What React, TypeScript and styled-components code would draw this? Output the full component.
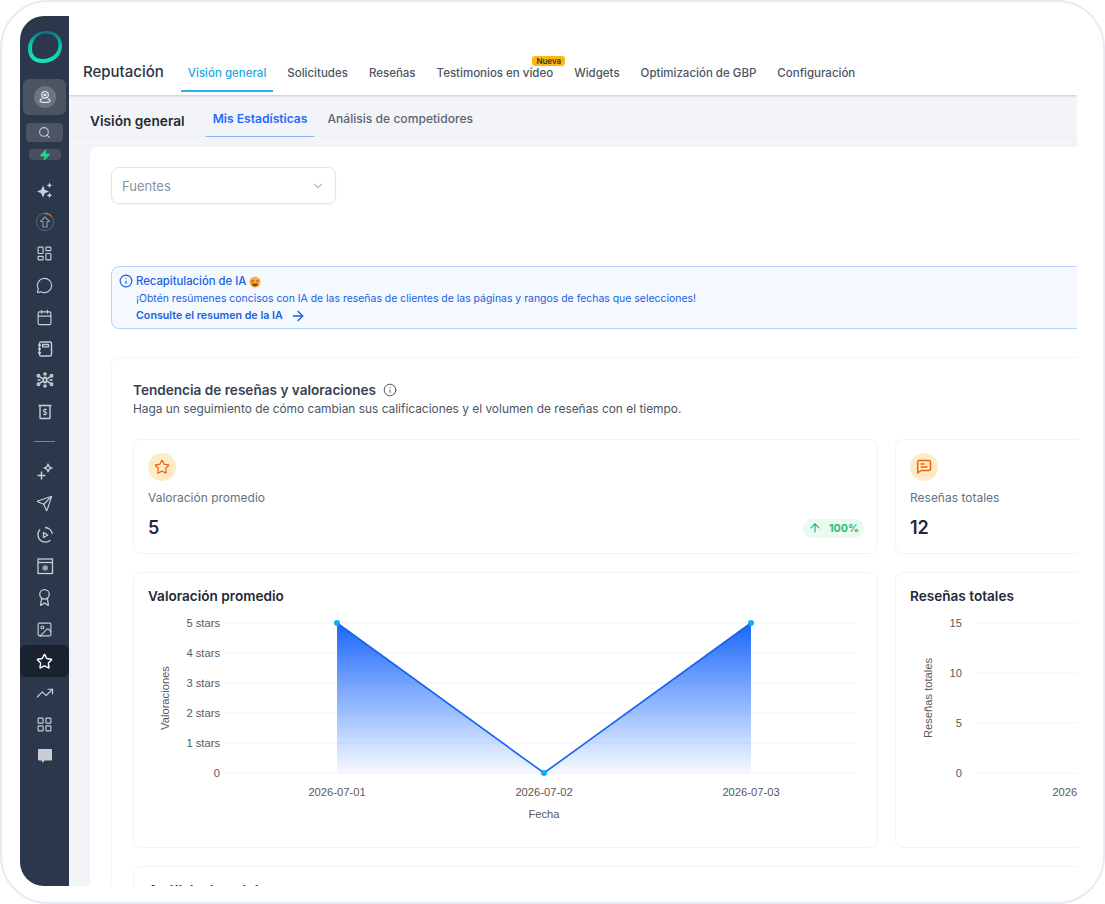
import React from "react";
import styled, { createGlobalStyle } from "styled-components";
import {
  ArrowRight, ArrowUp, Award, Calendar, ChevronDown, Image, Info, LayoutDashboard, LayoutGrid,
  MessageCircle, Search, Send, Star, TrendingUp, Zap,
} from "lucide-react";

const GlobalStyle = createGlobalStyle`
  html, body { margin: 0; padding: 0; background: #fff; }
  body { font-family: Inter, "Liberation Sans", sans-serif; }
  * { box-sizing: border-box; }
`;

const Frame = styled.div`
  width: 1105px;
  height: 904px;
  border: 2px solid #e7ebf6;
  border-radius: 48px;
  padding: 14px 26px 16px 18px;
  overflow: hidden;
`;

const Shell = styled.div`
  display: flex;
  height: 870px;
`;

const Rail = styled.nav`
  width: 49px;
  flex: none;
  background: #2b374a;
  border-radius: 24px 0 0 24px;
  display: flex;
  flex-direction: column;
  align-items: center;
  padding-top: 14px;
  color: #c9cdd4;
`;

const Logo = styled.svg`
  width: 36px;
  height: 34px;
  margin-bottom: 15px;
  flex: none;
`;

const AccountButton = styled.div`
  width: 43px;
  height: 36px;
  border-radius: 6px;
  background: #4a5463;
  display: flex;
  align-items: center;
  justify-content: center;
  flex: none;
  span {
    width: 22px;
    height: 22px;
    border-radius: 50%;
    background: #6c7481;
    display: flex;
    align-items: center;
    justify-content: center;
  }
`;

const SearchPill = styled.div`
  width: 37px;
  height: 19px;
  margin-top: 8px;
  border-radius: 4px;
  background: #4b5563;
  display: flex;
  align-items: center;
  justify-content: center;
  flex: none;
`;

const BoltPill = styled.div`
  width: 32px;
  height: 11px;
  margin: 7px 0 15px;
  border-radius: 4px;
  background: #46505f;
  display: flex;
  align-items: center;
  justify-content: center;
  color: #1fd692;
  flex: none;
`;

const RailItem = styled.div<{ $active?: boolean }>`
  width: 49px;
  height: ${(p) => (p.$active ? "32px" : "31.6px")};
  flex: none;
  display: flex;
  align-items: center;
  justify-content: center;
  border-radius: 6px;
  background: ${(p) => (p.$active ? "#1a2230" : "transparent")};
  color: ${(p) => (p.$active ? "#fff" : "inherit")};
`;

const RailDivider = styled.div`
  width: 21px;
  height: 1px;
  background: #7b838f;
  margin: 13px 0 14px;
  flex: none;
`;

const Main = styled.main`
  flex: 1;
  min-width: 0;
  background: #f3f4f8;
  overflow: hidden;
  display: flex;
  flex-direction: column;
`;

const TopBar = styled.header`
  height: 79px;
  flex: none;
  background: #fff;
  box-shadow: 0 1px 2px rgba(60, 64, 80, 0.22);
  display: flex;
  align-items: flex-end;
  padding-left: 14px;
  position: relative;
`;

const PageName = styled.h1`
  margin: 0 17px 13px 0;
  font-size: 15px;
  line-height: 20px;
  font-weight: 500;
  color: #2b3443;
`;

const TopTabs = styled.div`
  display: flex;
  gap: 7px;
`;

const TopTab = styled.div<{ $active?: boolean }>`
  position: relative;
  padding: 0 7px 7px;
  height: 34px;
  display: flex;
  align-items: flex-end;
  font-size: 11.5px;
  line-height: 20px;
  font-weight: 500;
  white-space: nowrap;
  color: ${(p) => (p.$active ? "#1ea7e4" : "#4b5563")};
  border-bottom: 2px solid ${(p) => (p.$active ? "#2cb2ee" : "transparent")};
  margin-bottom: 3px;
`;

const NewBadge = styled.span`
  position: absolute;
  top: -2px;
  right: -5px;
  height: 10px;
  padding: 0 4px;
  border-radius: 3px;
  background: #fbb818;
  color: #3f3208;
  font-size: 8px;
  line-height: 10px;
  font-weight: 600;
`;

const SubBar = styled.div`
  height: 42px;
  flex: none;
  border-bottom: 1px solid #eceef3;
  display: flex;
  align-items: flex-end;
  padding-left: 21px;
`;

const SubTitle = styled.h2`
  margin: 0 21px 5px 0;
  font-size: 13.7px;
  line-height: 20px;
  font-weight: 600;
  color: #1f2937;
`;

const SubTab = styled.div<{ $active?: boolean }>`
  padding: 0 7px 9px;
  height: 32px;
  margin-right: 6px;
  font-size: 12.1px;
  line-height: 17px;
  display: flex;
  align-items: flex-end;
  font-weight: ${(p) => (p.$active ? 600 : 500)};
  color: ${(p) => (p.$active ? "#1f6bff" : "#5b6472")};
  border-bottom: 1px solid ${(p) => (p.$active ? "#8db4fb" : "transparent")};
  margin-bottom: -1px;
`;

const Sheet = styled.div`
  width: 1200px;
  margin: 10px 0 0 21px;
  padding: 20px 0 0 21px;
  background: #fff;
  border-radius: 8px 0 0 0;
  flex: 1;
`;

const SourceSelect = styled.div`
  width: 225px;
  height: 37px;
  border: 1px solid #e3e5ea;
  border-radius: 8px;
  box-shadow: 0 1px 2px rgba(20, 30, 50, 0.06);
  display: flex;
  align-items: center;
  justify-content: space-between;
  padding: 0 10px;
  font-size: 13px;
  color: #8a93a3;
`;

const Banner = styled.div`
  margin-top: 62px;
  height: 63px;
  border: 1px solid #b8d3fb;
  border-radius: 8px;
  background: #f4f8ff;
  padding: 6px 7px;
  color: #1d5fe0;
  display: flex;
  gap: 3px;
`;

const BannerBody = styled.div`
  display: flex;
  flex-direction: column;
`;

const BannerTitle = styled.div`
  display: flex;
  align-items: center;
  gap: 3px;
  font-size: 11.3px;
  line-height: 17px;
  font-weight: 500;
`;

const BannerText = styled.div`
  font-size: 10.45px;
  line-height: 17px;
`;

const BannerLink = styled.div`
  display: flex;
  align-items: center;
  gap: 7px;
  font-size: 10.7px;
  line-height: 17px;
  font-weight: 600;
`;

const Section = styled.section`
  margin-top: 28px;
  border: 1px solid #f4f5f7;
  border-radius: 8px 0 0 8px;
  padding: 22px 0 0 21px;
`;

const SectionTitle = styled.h3`
  margin: 0;
  display: flex;
  align-items: center;
  gap: 7px;
  font-size: 13.6px;
  line-height: 20px;
  font-weight: 600;
  color: #374151;
`;

const SectionText = styled.p`
  margin: 0 0 21px;
  font-size: 11.9px;
  line-height: 18px;
  color: #4b5563;
`;

const CardGrid = styled.div`
  display: grid;
  grid-template-columns: 745px 745px;
  column-gap: 17px;
  row-gap: 18px;
`;

const Card = styled.div`
  border: 1px solid #f3f4f6;
  border-radius: 8px;
`;

const StatCard = styled(Card)`
  height: 115px;
  padding: 13px 14px 0;
  display: flex;
  flex-direction: column;
`;

const StatIcon = styled.div`
  width: 28px;
  height: 28px;
  flex: none;
  border-radius: 50%;
  background: #fdebc8;
  color: #f0610f;
  display: flex;
  align-items: center;
  justify-content: center;
`;

const StatLabel = styled.div`
  margin-top: 8px;
  font-size: 12px;
  line-height: 18px;
  color: #667085;
`;

const StatRow = styled.div`
  margin-top: 10px;
  display: flex;
  align-items: center;
  justify-content: space-between;
`;

const StatValue = styled.div`
  font-size: 18px;
  line-height: 22px;
  font-weight: 600;
  color: #1f2937;
`;

const TrendChip = styled.div`
  height: 19px;
  width: 61px;
  margin-right: -1px;
  border-radius: 10px;
  background: #e9fbf0;
  color: #22b573;
  font-size: 11px;
  font-weight: 600;
  display: flex;
  align-items: center;
  justify-content: center;
  gap: 7px;
  svg { color: #14a35c; }
`;

const ChartCard = styled(Card)`
  height: 276px;
  padding-top: 13px;
`;

const ChartTitle = styled.h4`
  margin: 0 0 1px 14px;
  font-size: 13.6px;
  line-height: 20px;
  font-weight: 600;
  color: #1f2937;
`;

const ChartSvg = styled.svg`
  display: block;
  text {
    font-family: "Liberation Sans", Arial, sans-serif;
    font-size: 11.2px;
    fill: #595959;
  }
`;

const NextCard = styled(Card)`
  margin-top: 18px;
  height: 60px;
  padding: 14px;
  font-size: 14px;
  line-height: 20px;
  font-weight: 600;
  color: #1f2937;
`;

const SparkleIcon = () => (
  <svg width="18" height="18" viewBox="0 0 18 18" fill="currentColor">
    <path d="M7 3.5l1.8 4.2L13 9.5l-4.2 1.8L7 15.5l-1.8-4.2L1 9.5l4.2-1.8z" />
    <path d="M13.5 0.5l.9 1.9 1.9.9-1.9.9-.9 1.9-.9-1.9-1.9-.9 1.9-.9z" />
    <path d="M13.5 10.5l.9 1.9 1.9.9-1.9.9-.9 1.9-.9-1.9-1.9-.9 1.9-.9z" />
  </svg>
);

const UploadRing = () => (
  <svg width="20" height="20" viewBox="0 0 20 20" fill="none" stroke="#8b919b">
    <circle cx="10" cy="10" r="8.6" stroke="#5e6672" strokeWidth="1" />
    <path d="M10 1.4a8.6 8.6 0 0 1 7 3.6" stroke="#e8762c" strokeWidth="1.1" />
    <path d="M10 5l-4.5 4.5H8V15h4V9.5h2.5z" strokeWidth="1.2" strokeLinejoin="round" />
  </svg>
);

const NotebookIcon = () => (
  <svg width="18" height="18" viewBox="0 0 18 18" fill="none" stroke="currentColor" strokeWidth="1.4">
    <rect x="3.5" y="2" width="12" height="14" rx="1.6" />
    <rect x="6.5" y="4.5" width="6" height="2.4" rx="0.5" />
    <path d="M2 5.2h3M2 9h3M2 12.8h3" />
  </svg>
);

const NetworkIcon = () => (
  <svg width="18" height="18" viewBox="0 0 18 18" fill="none" stroke="currentColor" strokeWidth="1.6">
    <ellipse cx="9" cy="9" rx="1.6" ry="2.6" />
    <circle cx="9" cy="3" r="1" />
    <circle cx="9" cy="15" r="1" />
    <circle cx="2.5" cy="4.8" r="1.2" />
    <circle cx="15.5" cy="4.8" r="1.2" />
    <circle cx="2.5" cy="13.2" r="1.2" />
    <circle cx="15.5" cy="13.2" r="1.2" />
    <path d="M4 5.8l3 2M14 5.8l-3 2M4 12.2l3-2M14 12.2l-3-2M1.5 9h3M13.5 9h3" />
  </svg>
);

const ReceiptIcon = () => (
  <svg width="18" height="18" viewBox="0 0 18 18" fill="none" stroke="currentColor" strokeWidth="1.4">
    <path d="M2.5 2.5h13M4 2.5v12.2c0 .5.3.8.8.8h8.4c.5 0 .8-.3.8-.8V2.5" />
    <path d="M10.8 6.5H8.4a1.2 1.2 0 0 0 0 2.5h1.2a1.2 1.2 0 0 1 0 2.5H7.2M9 5.5v7" strokeWidth="1" />
  </svg>
);

const SparkPlusIcon = () => (
  <svg width="18" height="18" viewBox="0 0 18 18" fill="none" stroke="currentColor" strokeWidth="1.5">
    <path d="M12 1.5l1.2 2.3 2.3 1.2-2.3 1.2L12 8.5l-1.2-2.3L8.5 5l2.3-1.2z" />
    <path d="M5.5 8.5v8M1.5 12.5h8" />
  </svg>
);

const PlayArcIcon = () => (
  <svg width="18" height="18" viewBox="0 0 18 18" fill="none" stroke="currentColor" strokeWidth="1.3">
    <path d="M9 1.5A7.5 7.5 0 0 1 16.4 8M14.5 14.2A7.5 7.5 0 0 1 4 3.5" />
    <path d="M7.5 6.5v5L11.8 9z" strokeLinejoin="round" />
  </svg>
);

const BrowserIcon = () => (
  <svg width="18" height="18" viewBox="0 0 18 18" fill="none" stroke="currentColor" strokeWidth="1.3">
    <rect x="2" y="2" width="14.5" height="14.5" />
    <path d="M2 5.5h14.5" />
    <circle cx="9.2" cy="11" r="2.8" fill="#9aa0aa" stroke="none" />
  </svg>
);

const ChatFilledIcon = () => (
  <svg width="16" height="16" viewBox="0 0 16 16" fill="currentColor">
    <path d="M2 1h12a1 1 0 0 1 1 1v9.5a1 1 0 0 1-1 1H7.5L5.5 15l-.6-2.5H2a1 1 0 0 1-1-1V2a1 1 0 0 1 1-1z" />
  </svg>
);

const PinIcon = () => (
  <svg width="14" height="14" viewBox="0 0 14 14" fill="none" stroke="#e6e8ec" strokeWidth="1.2">
    <circle cx="7" cy="4.8" r="3.3" />
    <circle cx="7" cy="4.8" r="1" />
    <path d="M4.2 8.6C2.6 9.2 2 10 2 10.8c0 1 2 1.7 5 1.7s5-.7 5-1.7c0-.8-.6-1.6-2.2-2.2" />
  </svg>
);

const ChatLinesIcon = () => (
  <svg width="16" height="16" viewBox="0 0 16 16" fill="none" stroke="currentColor" strokeWidth="1.5">
    <path d="M3 1.5h10A1.5 1.5 0 0 1 14.5 3v7a1.5 1.5 0 0 1-1.5 1.5H5L1.7 14V3A1.5 1.5 0 0 1 3 1.5z" strokeLinejoin="round" />
    <path d="M4.5 5h4M4.5 8h7" />
  </svg>
);

const StarEyesEmoji = () => (
  <svg width="12" height="12" viewBox="0 0 12 12">
    <circle cx="6" cy="6" r="5.6" fill="#f6b73c" />
    <path d="M3.5 3l.6 1.2 1.3.2-1 .9.3 1.3-1.2-.7-1.2.7.3-1.3-1-.9 1.3-.2zM8.5 3l.6 1.2 1.3.2-1 .9.3 1.3-1.2-.7-1.2.7.3-1.3-1-.9 1.3-.2z" fill="#e2503a" />
    <path d="M2.8 7.4h6.4C9 9.4 7.6 10.4 6 10.4S3 9.4 2.8 7.4z" fill="#7a4a22" />
  </svg>
);

const gridYs = [623, 653, 683, 713, 743, 773];
const starLabels = ["5 stars", "4 stars", "3 stars", "2 stars", "1 stars", "0"];
const dates = [
  { x: 337, label: "2026-07-01" },
  { x: 544, label: "2026-07-02" },
  { x: 751, label: "2026-07-03" },
];

const RatingChart = () => (
  <ChartSvg width={743} height={240} viewBox="134 607 743 240">
    <defs>
      <linearGradient id="ratingFill" x1="0" y1="0" x2="0" y2="1">
        <stop offset="0" stopColor="#1a66fa" />
        <stop offset="1" stopColor="#1f6bff" stopOpacity="0.04" />
      </linearGradient>
    </defs>
    {gridYs.map((y, i) => (
      <g key={y}>
        <line x1={224} x2={855} y1={y} y2={y} stroke="#f2f3f5" />
        <text x={220} y={y + 4} textAnchor="end">{starLabels[i]}</text>
      </g>
    ))}
    <polygon points="337,623 544,773 751,623 751,773 337,773" fill="url(#ratingFill)" />
    <polyline points="337,623 544,773 751,623" fill="none" stroke="#1463f5" strokeWidth="1.6" />
    {dates.map((d, i) => (
      <g key={d.x}>
        <circle cx={d.x} cy={i === 1 ? 773 : 623} r="3" fill="#0ab1f5" />
        <text x={d.x} y={796} textAnchor="middle">{d.label}</text>
      </g>
    ))}
    <text x={544} y={818} textAnchor="middle">Fecha</text>
    <text transform="translate(169 698) rotate(-90)" textAnchor="middle">Valoraciones</text>
  </ChartSvg>
);

const TotalsChart = () => (
  <ChartSvg width={743} height={240} viewBox="896 607 743 240">
    {[{ y: 623, t: "15" }, { y: 673, t: "10" }, { y: 723, t: "5" }, { y: 773, t: "0" }].map((g) => (
      <g key={g.y}>
        <line x1={975} x2={1300} y1={g.y} y2={g.y} stroke="#f2f3f5" />
        <text x={962} y={g.y + 4} textAnchor="end">{g.t}</text>
      </g>
    ))}
    <text x={1081} y={796} textAnchor="middle">2026-07-01</text>
    <text transform="translate(932 698) rotate(-90)" textAnchor="middle">Reseñas totales</text>
  </ChartSvg>
);

const App = () => (
  <>
    <GlobalStyle />
    <Frame>
      <Shell>
        <Rail>
          <Logo viewBox="0 0 36 34">
            <defs>
              <linearGradient id="logoRing" x1="0.5" y1="1" x2="0.55" y2="0">
                <stop offset="0" stopColor="#14e6bb" />
                <stop offset="0.6" stopColor="#10bfae" />
                <stop offset="1" stopColor="#0b6f7c" />
              </linearGradient>
            </defs>
            <path
              fillRule="evenodd"
              fill="url(#logoRing)"
              d="M18 1C27.5 0 35 5.5 35 15.5C35 26 26.5 33 15.5 33C6 33 1 27 1 19C1 9 8 2 18 1ZM18.5 3.5C10.5 3.5 5 10 5 18.5C5 25 9 29 15.5 29C24.5 29 31.5 23.5 31.5 15C31.5 8 26.5 3.5 18.5 3.5Z"
            />
          </Logo>
          <AccountButton><span><PinIcon /></span></AccountButton>
          <SearchPill><Search size={13} strokeWidth={2} /></SearchPill>
          <BoltPill><Zap size={12} fill="currentColor" /></BoltPill>
          <RailItem><SparkleIcon /></RailItem>
          <RailItem><UploadRing /></RailItem>
          <RailItem><LayoutDashboard size={17} strokeWidth={1.6} /></RailItem>
          <RailItem><MessageCircle size={17} strokeWidth={1.6} /></RailItem>
          <RailItem><Calendar size={17} strokeWidth={1.6} /></RailItem>
          <RailItem><NotebookIcon /></RailItem>
          <RailItem><NetworkIcon /></RailItem>
          <RailItem><ReceiptIcon /></RailItem>
          <RailDivider />
          <RailItem><SparkPlusIcon /></RailItem>
          <RailItem><Send size={17} strokeWidth={1.6} /></RailItem>
          <RailItem><PlayArcIcon /></RailItem>
          <RailItem><BrowserIcon /></RailItem>
          <RailItem><Award size={19} strokeWidth={1.6} /></RailItem>
          <RailItem><Image size={17} strokeWidth={1.6} /></RailItem>
          <RailItem $active><Star size={17} strokeWidth={2} /></RailItem>
          <RailItem><TrendingUp size={18} strokeWidth={1.6} /></RailItem>
          <RailItem><LayoutGrid size={17} strokeWidth={1.6} /></RailItem>
          <RailItem><ChatFilledIcon /></RailItem>
        </Rail>
        <Main>
          <TopBar>
            <PageName>Reputación</PageName>
            <TopTabs>
              <TopTab $active>Visión general</TopTab>
              <TopTab>Solicitudes</TopTab>
              <TopTab>Reseñas</TopTab>
              <TopTab>Testimonios en vídeo<NewBadge>Nueva</NewBadge></TopTab>
              <TopTab>Widgets</TopTab>
              <TopTab>Optimización de GBP</TopTab>
              <TopTab>Configuración</TopTab>
            </TopTabs>
          </TopBar>
          <SubBar>
            <SubTitle>Visión general</SubTitle>
            <SubTab $active>Mis Estadísticas</SubTab>
            <SubTab>Análisis de competidores</SubTab>
          </SubBar>
          <Sheet>
            <SourceSelect>
              Fuentes
              <ChevronDown size={14} color="#b4b9c2" />
            </SourceSelect>
            <Banner>
              <Info size={14} style={{ marginTop: 1, flex: "none" }} />
              <BannerBody>
                <BannerTitle>Recapitulación de IA <StarEyesEmoji /></BannerTitle>
                <BannerText>¡Obtén resúmenes concisos con IA de las reseñas de clientes de las páginas y rangos de fechas que selecciones!</BannerText>
                <BannerLink>Consulte el resumen de la IA <ArrowRight size={16} /></BannerLink>
              </BannerBody>
            </Banner>
            <Section>
              <SectionTitle>Tendencia de reseñas y valoraciones <Info size={14} strokeWidth={1.5} /></SectionTitle>
              <SectionText>Haga un seguimiento de cómo cambian sus calificaciones y el volumen de reseñas con el tiempo.</SectionText>
              <CardGrid>
                <StatCard>
                  <StatIcon><Star size={16} strokeWidth={1.8} /></StatIcon>
                  <StatLabel>Valoración promedio</StatLabel>
                  <StatRow>
                    <StatValue>5</StatValue>
                    <TrendChip><ArrowUp size={14} strokeWidth={1.8} />100%</TrendChip>
                  </StatRow>
                </StatCard>
                <StatCard>
                  <StatIcon><ChatLinesIcon /></StatIcon>
                  <StatLabel>Reseñas totales</StatLabel>
                  <StatRow><StatValue>12</StatValue></StatRow>
                </StatCard>
                <ChartCard>
                  <ChartTitle>Valoración promedio</ChartTitle>
                  <RatingChart />
                </ChartCard>
                <ChartCard>
                  <ChartTitle>Reseñas totales</ChartTitle>
                  <TotalsChart />
                </ChartCard>
              </CardGrid>
              <NextCard>Análisis de opiniones</NextCard>
            </Section>
          </Sheet>
        </Main>
      </Shell>
    </Frame>
  </>
);

export default App;
